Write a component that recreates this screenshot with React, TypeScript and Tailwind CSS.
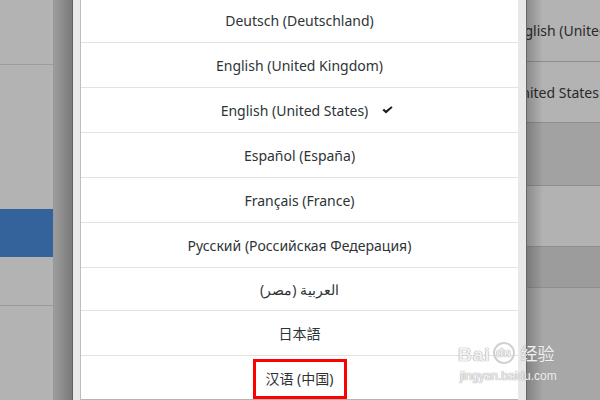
import React from 'react'

const font = { fontFamily: '"Noto Sans", "Open Sans", "Noto Sans CJK SC", sans-serif' }

const langs = [
  'Deutsch (Deutschland)',
  'English (United Kingdom)',
  'English (United States)',
  'Español (España)',
  'Français (France)',
  'Русский (Российская Федерация)',
  'العربية (مصر)',
  '日本語',
  '汉语 (中国)',
]

const rowHeights = ['h-[44px]', 'h-[45px]', 'h-[45px]', 'h-[45px]', 'h-[45px]', 'h-[45px]', 'h-[43px]', 'h-[45px]', 'h-[44px]']

const Check = () => (
  <svg width="11" height="8" viewBox="0 0 11 8" className="shrink-0">
    <path d="M0.5 4.2 L2 2.8 L4 4.6 L9.3 0.3 L10.6 1.4 L4 7.6 Z" fill="#1b1d1e" />
  </svg>
)

const LeftPanel = () => (
  <div className="w-[54px] h-full flex flex-col bg-[#b3b3b3] border-r border-[#999999] shrink-0">
    <div className="h-[65px] border-b border-[#9c9c9c]" />
    <div className="h-[144px]" />
    <div className="h-[48px] bg-[#33639a]" />
    <div className="h-[49px] border-b border-[#9c9c9c]" />
  </div>
)

const RightPanel = () => (
  <div className="relative flex-1 h-full overflow-hidden border-l border-[#666666] text-[14px] text-[#2a2a2a]">
    <div className="h-[62px] bg-[#b3b3b3] border-b border-[#8e8e8e] flex items-center whitespace-nowrap">
      <span className="ml-[-19px]">English (United States)</span>
    </div>
    <div className="h-[61px] bg-[#b3b3b3] border-b border-[#8e8e8e] flex items-center whitespace-nowrap">
      <span className="ml-[-16px]">United States</span>
    </div>
    <div className="h-[63px] bg-[#a2a2a2] border-b border-[#8e8e8e]" />
    <div className="h-[61px] bg-[#b2b2b2] border-b border-[#8e8e8e]" />
    <div className="h-[41px] bg-[#9c9c9c] border-b border-[#8e8e8e]" />
    <div className="h-[112px] bg-[#a7a7a7]" />
    <div className="absolute inset-y-0 left-0 w-[16px] bg-gradient-to-r from-[rgba(0,0,0,0.22)] to-transparent" />
  </div>
)

const Watermark = () => (
  <div
    className="absolute left-[458px] top-[342px] text-white/85 select-none [text-shadow:0_0_1px_#9a9a9a,0_0_1px_#9a9a9a]"
    style={{ fontFamily: '"Liberation Sans", "Noto Sans CJK SC", sans-serif' }}
  >
    <div className="flex items-end gap-[2px] leading-none">
      <span className="text-[19px] font-bold tracking-[1px]">Bai</span>
      <span className="w-[22px] h-[22px] rounded-full border-2 border-[#d0d0d0] text-[12px] font-bold flex items-center justify-center">du</span>
      <span className="text-[17px] ml-[4px] mb-[1px]">经验</span>
    </div>
    <div className="text-[12px] leading-none mt-[6px] ml-[2px]">jingyan.baidu.com</div>
  </div>
)

export default function App() {
  return (
    <div className="relative w-[600px] h-[400px] overflow-hidden flex bg-[#b3b3b3]" style={font}>
      <LeftPanel />
      <div className="w-[19px] h-full bg-gradient-to-r from-[#9c9c9c] to-[#7a7a7a] border-r border-[#5e5e5e] shrink-0" />
      <div className="w-[8px] h-full bg-[#e8e8e8] border-r border-[#bdbdbd] shrink-0" />
      <div className="w-[437px] h-full bg-white flex flex-col mt-[-1px] shrink-0">
        {langs.map((l, i) => (
          <div
            key={l}
            className={`${rowHeights[i]} shrink-0 flex items-center justify-center text-[14px] text-[#2e3436] ${i < langs.length - 1 ? 'border-b border-[#e2e2e2]' : ''}`}
          >
            {i === 2 ? (
              <>
                <span className="w-[15px]" />
                <span>{l}</span>
                <span className="ml-[14px]"><Check /></span>
              </>
            ) : i === 8 ? (
              <span className="w-[94px] h-[40px] mt-[1px] border-[3px] border-[#ff0000] flex items-center justify-center">{l}</span>
            ) : (
              <span dir={i === 6 ? 'rtl' : undefined}>{l}</span>
            )}
          </div>
        ))}
      </div>
      <div className="w-[8px] h-full bg-[#e8e8e8] shrink-0" />
      <RightPanel />
      <Watermark />
    </div>
  )
}
